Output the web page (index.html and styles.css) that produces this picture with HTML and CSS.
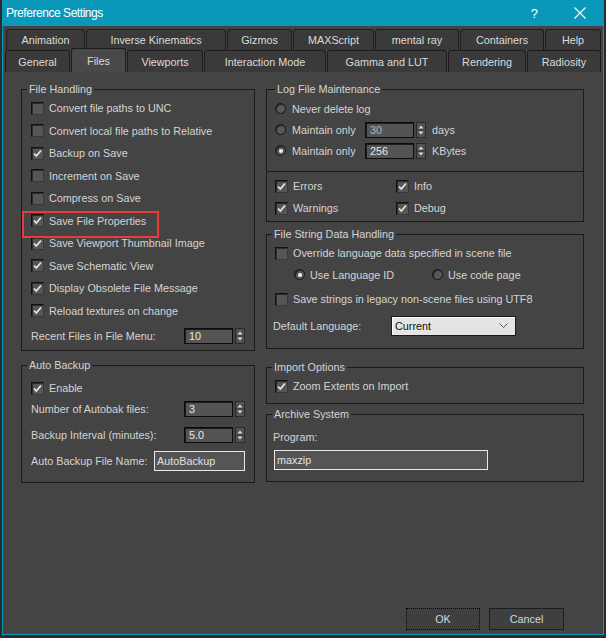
FILE: index.html
```html
<!DOCTYPE html>
<html>
<head>
<meta charset="utf-8">
<title>Preference Settings</title>
<link rel="stylesheet" href="styles.css">
</head>
<body>
<div class="window">
  <div class="titlebar">
    <span class="title">Preference Settings</span>
    <span class="help">?</span>
    <svg class="close" width="12" height="12" viewBox="0 0 12 12"><path d="M0.5 0.5L11.5 11.5M11.5 0.5L0.5 11.5" stroke="#ffffff" stroke-width="1.2"/></svg>
  </div>

  <div class="tabs">
    <div class="tabrow back">
      <div class="tab t-anim">Animation</div>
      <div class="tab t-ik">Inverse Kinematics</div>
      <div class="tab t-giz">Gizmos</div>
      <div class="tab t-mxs">MAXScript</div>
      <div class="tab t-mr">mental ray</div>
      <div class="tab t-cont">Containers</div>
      <div class="tab t-help">Help</div>
    </div>
    <div class="tabrow front">
      <div class="tab t-gen">General</div>
      <div class="tab t-files sel">Files</div>
      <div class="tab t-vp">Viewports</div>
      <div class="tab t-im">Interaction Mode</div>
      <div class="tab t-gam">Gamma and LUT</div>
      <div class="tab t-ren">Rendering</div>
      <div class="tab t-rad">Radiosity</div>
    </div>
  </div>

  <div class="panel">
    <div class="col-l">
      <fieldset class="group">
        <legend>File Handling</legend>
        <div class="fh-list">
          <div class="row"><span class="cb"></span>Convert file paths to UNC</div>
          <div class="row"><span class="cb"></span>Convert local file paths to Relative</div>
          <div class="row"><span class="cb"><svg width="11" height="11" viewBox="0 0 11 11"><polyline points="2,5.5 4.3,8 9,2.5" fill="none" stroke="#e6e6e6" stroke-width="1.8"/></svg></span>Backup on Save</div>
          <div class="row"><span class="cb"></span>Increment on Save</div>
          <div class="row"><span class="cb"></span>Compress on Save</div>
          <div class="row hl"><span class="cb"><svg width="11" height="11" viewBox="0 0 11 11"><polyline points="2,5.5 4.3,8 9,2.5" fill="none" stroke="#e6e6e6" stroke-width="1.8"/></svg></span>Save File Properties</div>
          <div class="row"><span class="cb"><svg width="11" height="11" viewBox="0 0 11 11"><polyline points="2,5.5 4.3,8 9,2.5" fill="none" stroke="#e6e6e6" stroke-width="1.8"/></svg></span>Save Viewport Thumbnail Image</div>
          <div class="row"><span class="cb"><svg width="11" height="11" viewBox="0 0 11 11"><polyline points="2,5.5 4.3,8 9,2.5" fill="none" stroke="#e6e6e6" stroke-width="1.8"/></svg></span>Save Schematic View</div>
          <div class="row"><span class="cb"><svg width="11" height="11" viewBox="0 0 11 11"><polyline points="2,5.5 4.3,8 9,2.5" fill="none" stroke="#e6e6e6" stroke-width="1.8"/></svg></span>Display Obsolete File Message</div>
          <div class="row"><span class="cb"><svg width="11" height="11" viewBox="0 0 11 11"><polyline points="2,5.5 4.3,8 9,2.5" fill="none" stroke="#e6e6e6" stroke-width="1.8"/></svg></span>Reload textures on change</div>
          <div class="row recent">
            <span class="lbl-l">Recent Files in File Menu:</span>
            <span class="num">10</span>
            <svg class="arrows" width="10" height="16" viewBox="0 0 10 16"><rect x="0.5" y="0.5" width="9" height="15" fill="#525252" stroke="#2a2a2a"/><line x1="1" y1="8" x2="9" y2="8" stroke="#363636"/><path d="M2.5 6.5h5L5 3.5z M2.5 9.5h5L5 12.5z" fill="#dcdcdc"/></svg>
          </div>
        </div>
      </fieldset>

      <fieldset class="group ab">
        <legend>Auto Backup</legend>
        <div class="ab-list">
          <div class="row enable"><span class="cb"><svg width="11" height="11" viewBox="0 0 11 11"><polyline points="2,5.5 4.3,8 9,2.5" fill="none" stroke="#e6e6e6" stroke-width="1.8"/></svg></span>Enable</div>
          <div class="row srow">
            <span class="lbl-l">Number of Autobak files:</span>
            <span class="num">3</span>
            <svg class="arrows" width="10" height="16" viewBox="0 0 10 16"><rect x="0.5" y="0.5" width="9" height="15" fill="#525252" stroke="#2a2a2a"/><line x1="1" y1="8" x2="9" y2="8" stroke="#363636"/><path d="M2.5 6.5h5L5 3.5z M2.5 9.5h5L5 12.5z" fill="#dcdcdc"/></svg>
          </div>
          <div class="row srow gap6">
            <span class="lbl-l">Backup Interval (minutes):</span>
            <span class="num">5.0</span>
            <svg class="arrows" width="10" height="16" viewBox="0 0 10 16"><rect x="0.5" y="0.5" width="9" height="15" fill="#525252" stroke="#2a2a2a"/><line x1="1" y1="8" x2="9" y2="8" stroke="#363636"/><path d="M2.5 6.5h5L5 3.5z M2.5 9.5h5L5 12.5z" fill="#dcdcdc"/></svg>
          </div>
          <div class="row srow gap6">
            <span class="lbl-name">Auto Backup File Name:</span>
            <span class="txt name">AutoBackup</span>
          </div>
        </div>
      </fieldset>
    </div>

    <div class="col-r">
      <fieldset class="group">
        <legend class="lg-log">Log File Maintenance</legend>
        <div class="radios">
          <div class="rrow"><span class="rb"></span><span>Never delete log</span></div>
          <div class="rrow"><span class="rb"></span><span class="rlabel">Maintain only</span><span class="num dim">30</span><svg class="arrows" width="10" height="16" viewBox="0 0 10 16"><rect x="0.5" y="0.5" width="9" height="15" fill="#525252" stroke="#2a2a2a"/><line x1="1" y1="8" x2="9" y2="8" stroke="#363636"/><path d="M2.5 6.5h5L5 3.5z M2.5 9.5h5L5 12.5z" fill="#dcdcdc"/></svg><span class="unit">days</span></div>
          <div class="rrow"><span class="rb on"></span><span class="rlabel">Maintain only</span><span class="num">256</span><svg class="arrows" width="10" height="16" viewBox="0 0 10 16"><rect x="0.5" y="0.5" width="9" height="15" fill="#525252" stroke="#2a2a2a"/><line x1="1" y1="8" x2="9" y2="8" stroke="#363636"/><path d="M2.5 6.5h5L5 3.5z M2.5 9.5h5L5 12.5z" fill="#dcdcdc"/></svg><span class="unit">KBytes</span></div>
        </div>
        <div class="sep"></div>
        <div class="logchecks">
          <div class="row"><span class="cb"><svg width="11" height="11" viewBox="0 0 11 11"><polyline points="2,5.5 4.3,8 9,2.5" fill="none" stroke="#e6e6e6" stroke-width="1.8"/></svg></span>Errors</div>
          <div class="row"><span class="cb"><svg width="11" height="11" viewBox="0 0 11 11"><polyline points="2,5.5 4.3,8 9,2.5" fill="none" stroke="#e6e6e6" stroke-width="1.8"/></svg></span>Info</div>
          <div class="row"><span class="cb"><svg width="11" height="11" viewBox="0 0 11 11"><polyline points="2,5.5 4.3,8 9,2.5" fill="none" stroke="#e6e6e6" stroke-width="1.8"/></svg></span>Warnings</div>
          <div class="row"><span class="cb"><svg width="11" height="11" viewBox="0 0 11 11"><polyline points="2,5.5 4.3,8 9,2.5" fill="none" stroke="#e6e6e6" stroke-width="1.8"/></svg></span>Debug</div>
        </div>
      </fieldset>

      <fieldset class="group fs">
        <legend>File String Data Handling</legend>
        <div class="fs-list">
          <div class="row"><span class="cb"></span>Override language data specified in scene file</div>
          <div class="lang-radios">
            <div class="lr first"><span class="rb on"></span>Use Language ID</div>
            <div class="lr"><span class="rb"></span>Use code page</div>
          </div>
          <div class="row utf"><span class="cb"></span>Save strings in legacy non-scene files using UTF8</div>
          <div class="deflang">
            <span class="lbl-dl">Default Language:</span>
            <div class="dd"><span>Current</span><svg class="chev" width="9" height="6" viewBox="0 0 9 6"><polyline points="0.5,0.5 4.5,4.5 8.5,0.5" fill="none" stroke="#555" stroke-width="1"/></svg></div>
          </div>
        </div>
      </fieldset>

      <fieldset class="group imp">
        <legend>Import Options</legend>
        <div class="imp-list">
          <div class="row"><span class="cb"><svg width="11" height="11" viewBox="0 0 11 11"><polyline points="2,5.5 4.3,8 9,2.5" fill="none" stroke="#e6e6e6" stroke-width="1.8"/></svg></span>Zoom Extents on Import</div>
        </div>
      </fieldset>

      <fieldset class="group arc">
        <legend>Archive System</legend>
        <div class="arc-list">
          <div class="prog">Program:</div>
          <div class="txt prog-in">maxzip</div>
        </div>
      </fieldset>
    </div>
  </div>

  <div class="footer">
    <div class="btn ok">OK</div>
    <div class="btn">Cancel</div>
  </div>
</div>
</body>
</html>
```

FILE: styles.css
```css
* { box-sizing: border-box; }
html, body { margin: 0; padding: 0; }
body {
  background: #2b2b2b;
  width: 606px;
  height: 638px;
  overflow: hidden;
  font-family: "Liberation Sans", Arial, sans-serif;
  font-size: 10.8px;
  color: #d4d4d4;
}
.window {
  margin-left: 2px;
  width: 602px;
  height: 635px;
  background: #444444;
  border: 1px solid #0a98ba;
  border-top: 0;
  display: flex;
  flex-direction: column;
}

/* title bar */
.titlebar {
  height: 26px;
  margin: 0 -1px;
  background: #0a98ba;
  display: flex;
  align-items: center;
  color: #ffffff;
  padding: 0 18px 0 4px;
  flex: none;
}
.title { font-size: 12px; letter-spacing: -0.45px; }
.help { margin-left: auto; font-size: 13px; }
.close { margin-left: 36px; }

/* tabs */
.tabs { margin-top: 3px; height: 43px; flex: none; }
.tabrow { display: flex; gap: 1px; }
.tabrow.back { height: 21px; padding-left: 3px; }
.tabrow.front { height: 22px; padding-left: 2px; }
.tab {
  height: 100%;
  flex: none;
  background: #3a3a3a;
  border: 1px solid #1c1c1c;
  border-bottom: 0;
  border-radius: 3px 3px 0 0;
  display: flex;
  align-items: center;
  justify-content: center;
  color: #dcdcdc;
  padding-top: 1px;
}
.tabrow.back .tab { padding-top: 0; }
.tab.sel {
  background: #494949;
  margin-top: -2px;
  height: 24px;
}
.t-anim { width: 79px; }
.t-ik { width: 140px; }
.t-giz { width: 65px; }
.t-mxs { width: 81px; }
.t-mr { width: 84px; }
.t-cont { width: 84px; }
.t-help { width: 56px; }
.t-gen { width: 65px; }
.t-files { width: 55px; }
.t-vp { width: 76px; }
.t-im { width: 122px; }
.t-gam { width: 120px; }
.t-ren { width: 78px; }
.t-rad { width: 74px; }

/* panel */
.panel { display: flex; gap: 11px; padding: 10px 0 0 18px; }
.col-l { width: 234px; flex: none; display: flex; flex-direction: column; }
.col-r { width: 318px; flex: none; display: flex; flex-direction: column; }

.group {
  margin: 0;
  padding: 0;
  min-width: 0;
  border: 1px solid #1b1b1b;
}
.group legend {
  padding: 0 2px;
  margin-left: 5px;
  line-height: 15px;
  height: 15px;
  color: #d4d4d4;
}
.group legend.lg-log { margin-left: 8px; }

.row { display: flex; align-items: center; gap: 5px; white-space: nowrap; }

/* checkbox */
.cb {
  width: 13px;
  height: 13px;
  flex: none;
  background: #565656;
  border: 1px solid #111111;
  border-right-color: #383838;
  border-bottom-color: #383838;
  box-shadow: inset 1px 1px 0 #2c2c2c;
  display: flex;
  align-items: center;
  justify-content: center;
}
.cb svg { display: block; }

/* radio */
.rb {
  width: 11px;
  height: 11px;
  flex: none;
  border-radius: 50%;
  background: #585858;
  border: 1px solid #141414;
  box-shadow: inset 1px 1px 0 #2a2a2a;
  display: flex;
  align-items: center;
  justify-content: center;
}
.rb.on::after {
  content: "";
  width: 4px;
  height: 4px;
  border-radius: 50%;
  background: #f2f2f2;
}

/* numeric field */
.num {
  width: 49px;
  height: 16px;
  flex: none;
  background: #545454;
  border: 1px solid #0c0c0c;
  box-shadow: inset 1px 1px 0 #1c1c1c;
  padding-left: 4px;
  line-height: 14px;
  color: #e8e8e8;
}
.num.dim { color: #b4b4b4; }
.arrows { flex: none; margin-left: 2px; display: block; }

.txt {
  height: 20px;
  background: #555555;
  border: 1px solid #e8e8e8;
  padding-left: 2px;
  line-height: 18px;
  color: #e2e2e2;
}

/* File handling */
.fh-list { padding: 0 9px 3px 9px; }
.fh-list .row { height: 22.5px; }
.fh-list .row.recent { height: 22px; margin-top: 3px; gap: 0; }
.lbl-l { width: 153px; flex: none; }
.hl { position: relative; }
.hl::after {
  content: "";
  position: absolute;
  left: -9px;
  top: 1.5px;
  width: 133px;
  height: 23px;
  border: 2px solid #ec3a3b;
}

/* auto backup */
.ab { margin-top: 7px; }
.ab-list { padding: 4px 9px 11px 9px; }
.ab-list .enable { height: 22px; }
.ab-list .srow { height: 20px; gap: 0; }
.ab-list .gap6 { margin-top: 6px; }
.lbl-name { width: 123px; flex: none; }
.txt.name { width: 91px; }

/* log file */
.radios { padding: 1px 8px 0 8px; }
.rrow { display: flex; align-items: center; height: 21px; white-space: nowrap; }
.rrow .rb { margin-right: 6px; }
.rlabel { width: 73px; flex: none; }
.unit { margin-left: 6px; }
.sep { height: 1px; background: #1b1b1b; margin-top: 10px; }
.logchecks {
  display: grid;
  grid-template-columns: 121px 1fr;
  padding: 3px 8px 2px 8px;
}
.logchecks .row { height: 22px; }

/* file string */
.fs { margin-top: 5px; }
.fs-list { padding: 0 8px 12px 8px; }
.fs-list .row { height: 22px; }
.fs-list .row.utf { margin-top: 3px; }
.lang-radios { display: flex; height: 21px; padding-left: 19px; }
.lr { display: flex; align-items: center; gap: 5px; white-space: nowrap; }
.lr.first { width: 138px; }
.deflang { display: flex; align-items: center; height: 20px; margin-top: 6px; margin-left: -2px; }
.lbl-dl { width: 118px; flex: none; }
.dd {
  width: 125px;
  height: 20px;
  background: #e4e4e4;
  border: 1px solid #1a1a1a;
  box-shadow: inset 1px 1px 0 #ffffff;
  color: #111111;
  display: flex;
  align-items: center;
  padding-left: 3px;
}
.chev { margin-left: auto; margin-right: 7px; display: block; }

/* import */
.imp { margin-top: 11px; }
.imp-list { padding: 0 8px 6px 8px; }
.imp-list .row { height: 22px; }

/* archive */
.arc { margin-top: 3px; }
.arc-list { padding: 5px 8px 11px 6px; }
.prog { height: 20px; line-height: 20px; }
.prog-in { margin-top: 3px; margin-left: 1px; width: 214px; }

/* footer */
.footer {
  margin-top: auto;
  display: flex;
  justify-content: flex-end;
  gap: 9px;
  padding: 0 39px 4px 0;
  flex: none;
}
.btn {
  width: 75px;
  height: 22px;
  background: #3f3f3f;
  border: 1px solid #1e1e1e;
  display: flex;
  align-items: center;
  justify-content: center;
  color: #d2d8dc;
}
.btn.ok { width: 74px; border: 1px dotted #050505; }
```
